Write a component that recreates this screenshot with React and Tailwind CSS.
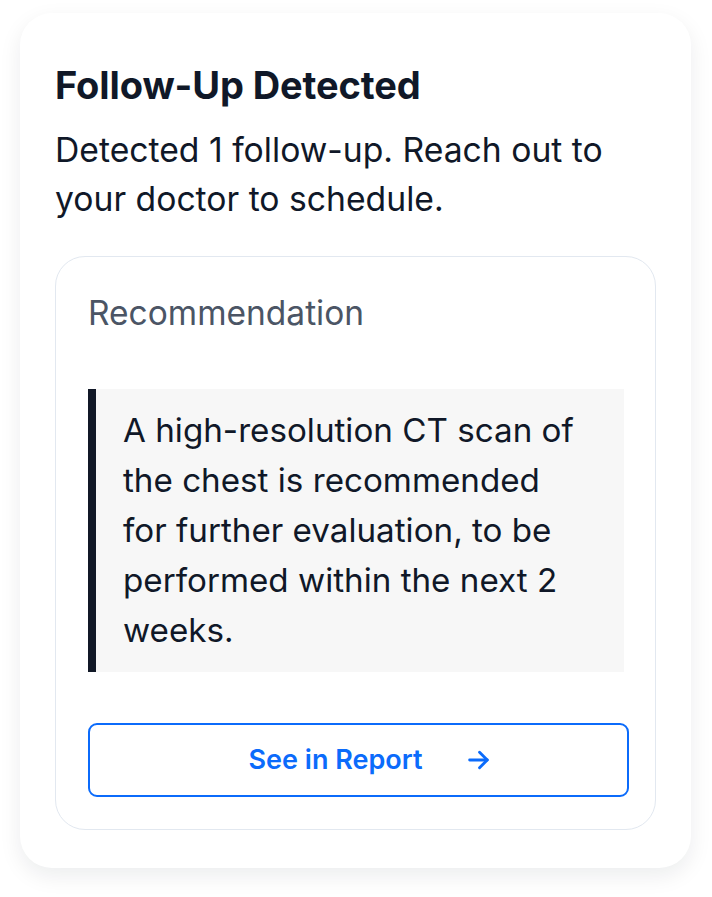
import React from 'react';

const ArrowRight = () => (
  <svg width="22" height="22" viewBox="0 0 20 20" fill="none" stroke="currentColor" strokeWidth="2.6" strokeLinecap="round" strokeLinejoin="round">
    <path d="M1.5 10h16" />
    <path d="M10.5 3l7 7-7 7" />
  </svg>
);

export default function App() {
  return (
    <div className="min-h-[897px] bg-white pl-[20px] pt-[13px]" style={{ fontFamily: 'Inter, "Noto Sans", sans-serif' }}>
      {/* Follow-up card */}
      <div className="w-[671px] rounded-[32px] bg-white px-[35px] pt-[49px] pb-[38px] shadow-[0_8px_22px_rgba(15,23,42,0.08)]">
        <h2 className="text-[38px] leading-[46px] font-bold text-[#101828] tracking-[-0.1px]">Follow-Up Detected</h2>
        <p className="mt-[17px] text-[33.7px] leading-[49px] text-[#101828]">
          Detected 1 follow-up. Reach out to your doctor to schedule.
        </p>

        <div className="mt-[33px] rounded-[30px] border-[1.5px] border-[#e2e8f0] pl-[32px] pt-[32px] pb-[32px]">
          <div className="text-[33.5px] leading-[49px] text-[#4b5565]">Recommendation</div>

          <div className="mt-[51px] w-[536px] border-l-[8px] border-[#111827] bg-[#f7f7f7] pl-[27px] pr-[39px] pt-[16px] pb-[17px]">
            <p className="text-[33.2px] leading-[50px] text-[#101828]">
              A high-resolution CT scan of the chest is recommended for further evaluation, to be performed within the next 2 weeks.
            </p>
          </div>

          <button className="mt-[51px] flex h-[74px] w-[541px] items-center justify-center gap-[46px] rounded-[9px] border-2 border-[#0b6bfb] pl-[22px] text-[#0b6bfb]">
            <span className="text-[27px] font-semibold">See in Report</span>
            <ArrowRight />
          </button>
        </div>
      </div>
    </div>
  );
}
